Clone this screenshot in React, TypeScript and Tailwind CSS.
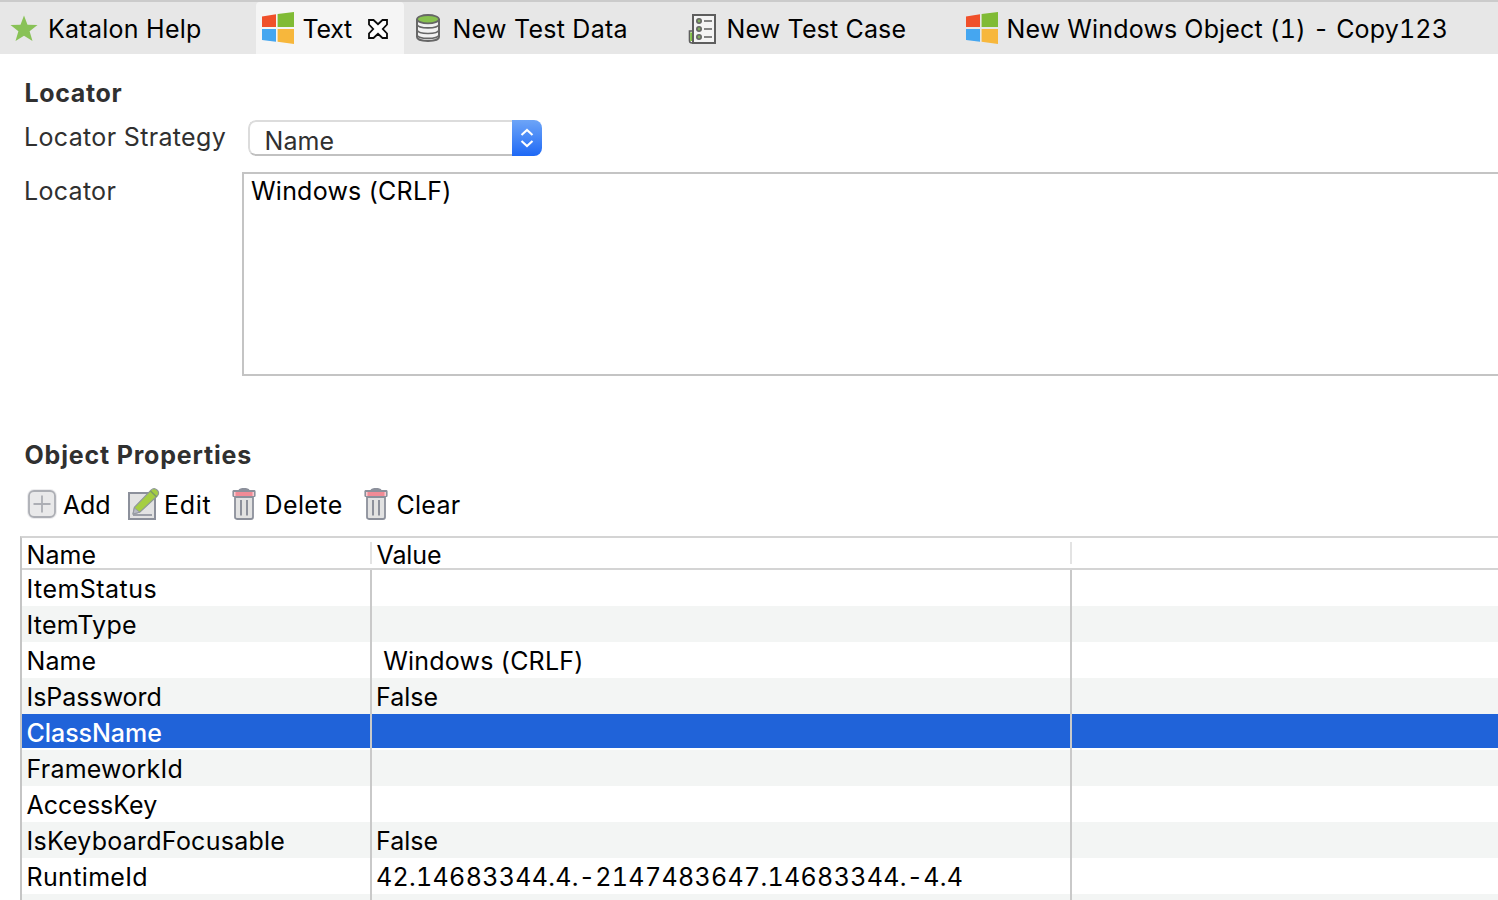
import type { ReactNode } from "react";

function StarIcon() {
  return (
    <svg width="28" height="28" viewBox="0 0 28 28" className="shrink-0">
      <path d="M14 0.500l3.500 9.300 10 .3-7.900 6.200L22.500 26 14 20.800 5.500 26l2.900-9.700L.5 10.100l10-.3z" fill="#89c257" />
    </svg>
  );
}

function WindowsIcon() {
  return (
    <svg width="32" height="32" viewBox="0 0 32 32" className="shrink-0">
      <path d="M0 4.4L14 2.3V15H0z" fill="#f0502a" />
      <path d="M15.6 2L32 0v15H15.6z" fill="#80bb35" />
      <path d="M0 17h14v12.8L0 28z" fill="#45a6f0" />
      <path d="M15.6 17H32v15l-16.4-2.3z" fill="#f7b73c" />
    </svg>
  );
}

function CloseIcon() {
  return (
    <svg width="20" height="20" viewBox="0 0 20 20" className="shrink-0">
      <path
        d="M1 1h4.500L10 5.200 14.500 1H19v4.500L14.800 10 19 14.500V19h-4.500L10 14.800 5.500 19H1v-4.500L5.200 10 1 5.500z"
        fill="#fff"
        stroke="#0a0a0a"
        strokeWidth="1.800"
      />
    </svg>
  );
}

function DatabaseIcon() {
  return (
    <svg width="24" height="28" viewBox="0 0 24 28" className="shrink-0">
      <path d="M1 5v18c0 5.200 22 5.200 22 0V5" fill="#f1f1f1" stroke="#666" strokeWidth="2" />
      <path
        d="M1 10.500c1.500 4.500 20.500 4.500 22 0M1 16c1.500 4.700 20.500 4.700 22 0M1 21c1.500 4.500 20.500 4.500 22 0"
        fill="none"
        stroke="#666"
        strokeWidth="1.600"
      />
      <ellipse cx="12" cy="5.200" rx="11" ry="4.200" fill="#87c14e" stroke="#666" strokeWidth="1.800" />
    </svg>
  );
}

function TestCaseIcon() {
  return (
    <svg width="28" height="30" viewBox="0 0 28 30" className="shrink-0">
      <path d="M5 17H1.500v9.500c0 1.500.8 2.500 2.500 2.500h3z" fill="#fff" stroke="#5e5e5e" strokeWidth="1.600" />
      <path d="M2.200 18.500H4.200V27H2.200z" fill="#7fc241" />
      <path d="M5 1h22v28H5z" fill="#f4f4f4" stroke="#5e5e5e" strokeWidth="2" />
      {[7, 15, 23].map((y) => (
        <g key={y}>
          <circle cx="11" cy={y} r="2.200" fill="#83ad61" stroke="#666" strokeWidth="1.600" />
          <path d={`M16 ${y}h8`} stroke="#777" strokeWidth="1.800" />
        </g>
      ))}
    </svg>
  );
}

function AddIcon() {
  return (
    <svg width="32" height="32" viewBox="0 0 32 32" className="shrink-0">
      <rect x="1" y="1" width="30" height="30" rx="7" fill="#ececee" />
      <rect x="3" y="3" width="26" height="26" rx="5" fill="#e9e9ea" stroke="#acaeb4" strokeWidth="1.800" />
      <path d="M16 7.500v17M7.500 16h17" stroke="#acaeb4" strokeWidth="1.800" />
    </svg>
  );
}

function EditIcon() {
  return (
    <svg width="32" height="32" viewBox="0 0 32 32" className="shrink-0">
      <path d="M1 5h26v26H1z" fill="#e3e3e3" stroke="#8c909b" strokeWidth="2" />
      <path d="M5 27h19" stroke="#8c909b" strokeWidth="1.600" />
      <path d="M5 26l1.400-6.600L23 2.200c2-2 4-2 6-.2s2.200 4 .2 6L12 24z" fill="#a5ce42" stroke="#8f9996" strokeWidth="1.200" />
      <path d="M22.500 3l6.200 6" stroke="#7f9b65" strokeWidth="1.600" />
      <path d="M5 26l1.400-6 5.400 4.200z" fill="#b9bcc4" stroke="#9599a3" />
    </svg>
  );
}

function TrashIcon() {
  return (
    <svg width="24" height="32" viewBox="0 0 24 32" className="shrink-0">
      <path d="M3 9h18v20c0 1.300-.6 2-2 2H5c-1.400 0-2-.7-2-2z" fill="#e2e2e2" stroke="#8c909b" strokeWidth="1.800" />
      <path d="M9 12v15.500M15 12v15.500" stroke="#8c909b" strokeWidth="2" />
      <path d="M6.500 2C7.500-.6 16.500-.6 17.500 2z" fill="#8c909b" />
      <path d="M2 2h20c1 0 1.600.5 1.600 1.500v4c0 1-.6 1.500-1.600 1.500H2C1 9 .4 8.500.4 7.500v-4C.4 2.500 1 2 2 2z" fill="#8c909b" />
      <path d="M3 4h18v4H3z" fill="#f18b96" />
      <path d="M2 4h1.500v4H2zM20.500 4H22v4h-1.500z" fill="#f8cbd0" />
    </svg>
  );
}

function StepperIcon() {
  return (
    <svg width="14" height="20" viewBox="0 0 14 20">
      <path d="M1.500 7L7 2l5.500 5M1.500 13L7 18l5.500-5" fill="none" stroke="#fff" strokeWidth="2.100" />
    </svg>
  );
}

function ToolButton({ icon, label, className }: { icon: ReactNode; label: string; className: string }) {
  return (
    <button className={`flex items-center whitespace-nowrap ${className}`}>
      {icon}
      <span className="pt-px">{label}</span>
    </button>
  );
}

const rows = [
  { name: "ItemStatus", value: "", tracking: "tracking-[0.45px]" },
  { name: "ItemType", value: "", tracking: "tracking-[0.25px]" },
  { name: "Name", value: "\u00a0Windows (CRLF)", tracking: "tracking-[0.1px]", valueTracking: "tracking-[0.2px]" },
  { name: "IsPassword", value: "False", tracking: "tracking-[-0.03px]" },
  { name: "ClassName", value: "", tracking: "tracking-[-0.05px]", selected: true },
  { name: "FrameworkId", value: "", tracking: "tracking-[0.22px]" },
  { name: "AccessKey", value: "", tracking: "tracking-[0px]" },
  { name: "IsKeyboardFocusable", value: "False", tracking: "tracking-[0.25px]" },
  {
    name: "RuntimeId",
    value: "42.14683344.4.-2147483647.14683344.-4.4",
    tracking: "tracking-[0.35px]",
    valueTracking: "tabular-nums tracking-[0.31px]",
  },
  { name: "", value: "", tracking: "" },
];

export default function App() {
  return (
    <div className="flex h-[900px] w-[1498px] flex-col overflow-hidden bg-white font-['Inter',sans-serif] text-[25px] leading-[30px] text-black">
      <nav className="flex h-[54px] shrink-0 items-stretch whitespace-nowrap border-t-2 border-[#cbcbcb] bg-[#e7e7e7]">
        <div className="flex w-[256px] items-center pl-2.5 pt-0.5">
          <StarIcon />
          <span className="ml-[10px] tracking-[0.26px]">Katalon Help</span>
        </div>
        <div className="flex w-[148px] items-center rounded-t-sm bg-[#f5f5f5] pl-1.5 pt-0.5">
          <div className="pb-0.5"><WindowsIcon /></div>
          <span className="ml-[8.5px] w-[65px] tracking-[-0.25px]">Text</span>
          <div className="pb-px"><CloseIcon /></div>
        </div>
        <div className="flex w-[272px] items-center pl-3 pt-0.5">
          <div className="pb-0.5"><DatabaseIcon /></div>
          <span className="ml-[12.5px] tracking-[0.25px]">New Test Data</span>
        </div>
        <div className="flex w-[282px] items-center pl-3 pt-0.5">
          <TestCaseIcon />
          <span className="ml-[10.5px] tracking-[0.15px]">New Test Case</span>
        </div>
        <div className="flex items-center pl-2 pt-0.5">
          <div className="pb-0.5"><WindowsIcon /></div>
          <span className="ml-[8.500px] tracking-[0.17px] tabular-nums">New Windows Object (1) - Copy123</span>
        </div>
      </nav>

      <section className="mt-6 shrink-0 text-[#303030]">
        <h2 className="ml-[24.5px] font-bold tracking-[0.65px]">Locator</h2>
        <div className="mt-3 flex h-9">
          <label className="ml-6 mt-0.5 w-[224px] tracking-[0.34px]">Locator Strategy</label>
          <button className="flex h-9 w-[294px] overflow-hidden rounded-lg text-left">
            <span className="h-9 flex-1 rounded-l-lg border-2 border-r-0 border-[#dcdcdc] border-b-[#c1c1c1] pl-[14.500px] pt-1 tracking-[0.1px]">
              Name
            </span>
            <span className="flex h-9 w-[30px] items-center justify-center bg-gradient-to-b from-[#6da4f7] to-[#1d68f5]">
              <StepperIcon />
            </span>
          </button>
        </div>
        <div className="mt-4 flex h-[204px]">
          <label className="ml-6 mt-1 w-[218px] tracking-[0.3px]">Locator</label>
          <div className="flex-1 border-2 border-r-0 border-[#c4c4c4] pl-[7px] pt-0.5 tracking-[0.22px] text-black">
            Windows (CRLF)
          </div>
        </div>
      </section>

      <section className="mt-16 flex min-h-0 flex-1 flex-col">
        <h2 className="ml-[24.5px] shrink-0 font-bold tracking-[0.81px] text-[#303030]">Object Properties</h2>
        <div className="mt-[18px] flex h-8 shrink-0">
          <ToolButton icon={<AddIcon />} label="Add" className="ml-[26px] w-[102px] gap-[5px] tracking-[-0.2px]" />
          <ToolButton icon={<EditIcon />} label="Edit" className="w-[104px] gap-1 tracking-[0.7px]" />
          <ToolButton icon={<TrashIcon />} label="Delete" className="w-[132px] gap-[8.5px] tracking-[0.4px]" />
          <ToolButton icon={<TrashIcon />} label="Clear" className="gap-[8.5px] tracking-[0.25px]" />
        </div>
        <div className="ml-5 mt-4 flex min-h-0 flex-1 flex-col overflow-hidden border-l-2 border-t-2 border-l-[#c5c5c5] border-t-[#d4d4d4]">
          <div className="flex h-8 shrink-0 border-b-2 border-[#d4d4d4]">
            <div className="mt-1 flex h-[22px] w-[350px] items-center border-r-2 border-[#e3e3e3] pl-[4.5px] pt-1 tracking-[0.1px]">
              Name
            </div>
            <div className="mt-1 flex h-[22px] w-[700px] items-center border-r-2 border-[#e3e3e3] pl-[4.500px] pt-1 tracking-[-0.1px]">
              Value
            </div>
          </div>
          {rows.map((row, i) => (
            <div
              key={i}
              className={`flex h-9 shrink-0 whitespace-nowrap ${
                row.selected
                  ? "bg-[linear-gradient(#2063d9_34px,#fff_34px)] font-medium text-white"
                  : i % 2
                    ? "bg-[#f3f5f4]"
                    : "bg-white"
              }`}
            >
              <div className={`w-[350px] border-r-2 border-[#c9c9c9] pl-[4.5px] pt-1 ${row.tracking}`}>{row.name}</div>
              <div className={`w-[700px] border-r-2 border-[#c9c9c9] pl-1 pt-1 ${row.valueTracking ?? ""}`}>{row.value}</div>
            </div>
          ))}
        </div>
      </section>
    </div>
  );
}
